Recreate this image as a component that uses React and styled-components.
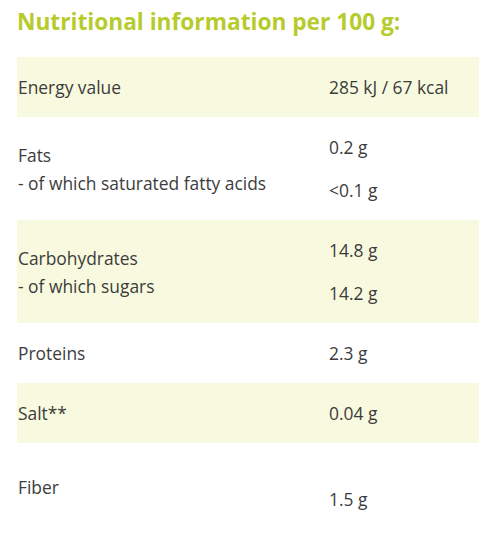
import React from "react";
import styled, { createGlobalStyle } from "styled-components";

const GlobalStyle = createGlobalStyle`
  body {
    margin: 0;
    background: #ffffff;
    font-family: "Open Sans", "Liberation Sans", sans-serif;
  }
`;

const rows = [
  { labels: ["Energy value"], values: ["285 kJ / 67 kcal"], shaded: true },
  {
    labels: ["Fats", "- of which saturated fatty acids"],
    values: ["0.2 g", "<0.1 g"],
  },
  {
    labels: ["Carbohydrates", "- of which sugars"],
    values: ["14.8 g", "14.2 g"],
    shaded: true,
  },
  { labels: ["Proteins"], values: ["2.3 g"] },
  { labels: ["Salt**"], values: ["0.04 g"], shaded: true },
  { labels: ["Fiber"], values: ["1.5 g"], top: 30, shift: 12 },
];

const App = () => {
  return (
    <>
      <GlobalStyle />
      <Wrapper>
        <Title>Nutritional information per 100 g:</Title>
        <Table>
          {rows.map((row, i) => (
            <Row key={i} $shaded={row.shaded} $top={row.top}>
              <Label>
                {row.labels.map((l) => (
                  <div key={l}>{l}</div>
                ))}
              </Label>
              <Values $shift={row.shift}>
                {row.values.map((v) => (
                  <div key={v}>{v}</div>
                ))}
              </Values>
            </Row>
          ))}
        </Table>
      </Wrapper>
    </>
  );
};

export default App;

const Wrapper = styled.div`
  padding: 0 12px 0 17px;
`;

const Title = styled.h2`
  margin: 0;
  padding-top: 4px;
  height: 53px;
  font-size: 22.7px;
  line-height: 36px;
  font-weight: 700;
  color: #b6cb2c;
`;

const Table = styled.div`
  display: flex;
  flex-direction: column;
  width: 462px;
`;

const Row = styled.div`
  display: grid;
  grid-template-columns: 312px 1fr;
  align-items: ${(p) => (p.$top ? "start" : "center")};
  padding: ${(p) => (p.$top ? `${p.$top}px 0 30px` : "16px 0")};
  background: ${(p) => (p.$shaded ? "#f8fadf" : "transparent")};
  color: #3c3c3c;
  font-size: 17.4px;
  line-height: 28px;
`;

const Label = styled.div`
  padding-left: 1px;
`;

const Values = styled.div`
  display: flex;
  flex-direction: column;
  gap: 15px;
  padding-top: ${(p) => (p.$shift ? `${p.$shift}px` : "0")};
`;
